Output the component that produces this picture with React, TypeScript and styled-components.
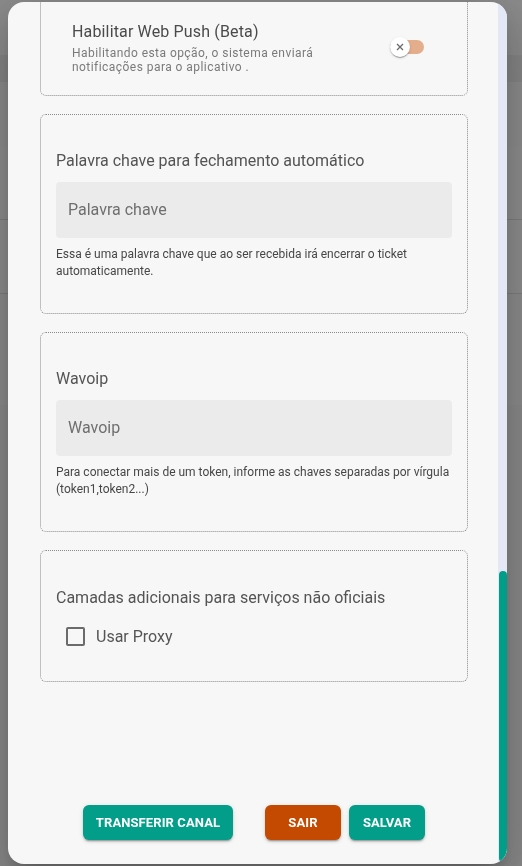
import React, { useLayoutEffect, useRef, useState } from "react";
import styled, { createGlobalStyle } from "styled-components";

const GlobalStyle = createGlobalStyle`
  html, body {
    margin: 0;
    padding: 0;
    height: 100%;
  }
  body {
    font-family: Roboto, "Noto Sans", Arial, sans-serif;
    background: #ffffff;
    overflow: hidden;
  }
  * {
    box-sizing: border-box;
  }
`;

// page behind the modal
const Page = styled.div`
  height: 866px;
  display: flex;
  flex-direction: column;
  background: #ffffff;
`;

const Band = styled.div<{ $h: number; $bg: string; $line?: boolean }>`
  height: ${(p) => p.$h}px;
  flex-shrink: 0;
  background: ${(p) => p.$bg};
  border-bottom: ${(p) => (p.$line ? "1px solid #e2e2e2" : "none")};
`;

const Backdrop = styled.div`
  position: fixed;
  inset: 0;
  background: rgba(0, 0, 0, 0.45);
  display: flex;
  padding: 2px 15px 2px 8px;
`;

const Dialog = styled.div`
  flex: 1;
  display: flex;
  background: #f7f7f7;
  border-radius: 16px;
  overflow: hidden;
  box-shadow: 0 11px 15px -7px rgba(0, 0, 0, 0.2),
    0 24px 38px 3px rgba(0, 0, 0, 0.14), 0 9px 46px 8px rgba(0, 0, 0, 0.12);
`;

const ScrollArea = styled.div`
  flex: 1;
  overflow-y: auto;
  scrollbar-width: none;

  &::-webkit-scrollbar {
    display: none;
  }
`;

const ScrollTrack = styled.div`
  width: 9px;
  flex-shrink: 0;
  background: #e4e7f6;
  padding-bottom: 2px;
`;

const ScrollThumb = styled.div`
  width: 8px;
  margin-left: 1px;
  border-radius: 4px;
  background: #009e88;
`;

const Content = styled.div`
  display: flex;
  flex-direction: column;
  gap: 18px;
  padding: 0 30px 24px 32px;
`;

const DialogTitle = styled.h2`
  margin: 0;
  padding: 20px 0 0 0;
  height: 64px;
  font-size: 20px;
  font-weight: 500;
  color: #333;
`;

const Card = styled.div<{ $pad: string }>`
  border: 1px dotted #8a8a8a;
  border-radius: 6px;
  padding: ${(p) => p.$pad};
`;

const Title = styled.div`
  font-size: 16px;
  line-height: 24px;
  color: #545454;
`;

const InputBox = styled.input`
  display: block;
  width: 100%;
  height: 56px;
  margin-top: 9px;
  border: none;
  border-radius: 4px;
  background: #ebebeb;
  padding: 0 12px;
  font-family: inherit;
  font-size: 16px;
  color: #333;
  outline: none;

  &::placeholder {
    color: #6f6f6f;
  }
`;

const TextArea = styled.textarea`
  display: block;
  width: 100%;
  height: 246px;
  margin-top: 9px;
  border: none;
  border-radius: 4px;
  background: #ebebeb;
  padding: 18px 12px;
  font-family: inherit;
  font-size: 16px;
  resize: none;
  outline: none;

  &::placeholder {
    color: #6f6f6f;
  }
`;

const Helper = styled.p`
  margin: 8px 0 0 0;
  font-size: 12px;
  line-height: 17.5px;
  color: #474747;
`;

const PushRow = styled.div`
  display: flex;
  align-items: center;
  justify-content: space-between;
`;

const PushText = styled.div`
  max-width: 270px;
`;

const PushTitle = styled.div`
  font-size: 16px;
  line-height: 24px;
  color: #4a4a4a;
  letter-spacing: 0.15px;
`;

const PushSub = styled.div`
  margin-top: 2px;
  font-size: 12px;
  line-height: 14px;
  color: #7a7a7a;
  letter-spacing: 0.45px;
`;

const Switch = styled.span`
  position: relative;
  width: 34px;
  height: 20px;
  flex-shrink: 0;
`;

const Track = styled.span`
  position: absolute;
  left: 0;
  top: 3px;
  width: 34px;
  height: 14px;
  border-radius: 7px;
  background: #e4ad8c;
`;

const Thumb = styled.span`
  position: absolute;
  left: 0;
  top: 0;
  width: 20px;
  height: 20px;
  border-radius: 50%;
  background: #ffffff;
  display: flex;
  align-items: center;
  justify-content: center;
  box-shadow: 0 2px 1px -1px rgba(0, 0, 0, 0.2), 0 1px 1px 0 rgba(0, 0, 0, 0.14),
    0 1px 3px 0 rgba(0, 0, 0, 0.12);
`;

const CheckRow = styled.label`
  display: flex;
  align-items: center;
  gap: 11px;
  height: 42px;
  margin-top: 6px;
  padding-left: 10px;
  cursor: pointer;
`;

const CheckBox = styled.span`
  width: 19px;
  height: 19px;
  border: 2px solid #6b6b6b;
  border-radius: 2px;
`;

const CheckLabel = styled.span`
  font-size: 16px;
  color: #555;
`;

const Actions = styled.div`
  display: flex;
  justify-content: center;
  gap: 8px;
  margin-top: 105px;
`;

const Button = styled.button<{ $color: string; $w: number; $spaced?: boolean }>`
  width: ${(p) => p.$w}px;
  height: 35px;
  margin-right: ${(p) => (p.$spaced ? 24 : 0)}px;
  border: none;
  border-radius: 6px;
  background: ${(p) => p.$color};
  color: #ffffff;
  font-family: inherit;
  font-size: 13px;
  font-weight: 700;
  letter-spacing: 0.1px;
  text-transform: uppercase;
  cursor: pointer;
  box-shadow: 0 3px 1px -2px rgba(0, 0, 0, 0.2), 0 2px 2px 0 rgba(0, 0, 0, 0.14),
    0 1px 5px 0 rgba(0, 0, 0, 0.12);
`;

type Field = { title: string; placeholder: string; helper: string; multiline?: boolean };

const earlierFields: Field[] = [
  { title: "Nome da conexão", placeholder: "Nome", helper: "Nome exibido para identificar este canal nas filas e nos relatórios." },
  { title: "Mensagem de saudação", placeholder: "Saudação", helper: "Mensagem enviada automaticamente quando um novo ticket é aberto.", multiline: true },
  { title: "Mensagem de despedida", placeholder: "Despedida", helper: "Mensagem enviada automaticamente quando o ticket é encerrado." },
  { title: "Mensagem fora de expediente", placeholder: "Fora de expediente", helper: "Enviada quando o contato escreve fora do horário de atendimento." },
  { title: "Tempo de inatividade (minutos)", placeholder: "Minutos", helper: "Após este tempo sem resposta o ticket será encerrado." },
  { title: "Token da API", placeholder: "Token", helper: "Token utilizado para integrações externas com este canal." },
  { title: "Filas", placeholder: "Selecione as filas", helper: "Filas que receberão os tickets deste canal." },
];

function FieldCard({ title, placeholder, helper, multiline }: Field) {
  return (
    <Card $pad="34px 15px 32px 15px">
      <Title>{title}</Title>
      {multiline ? <TextArea placeholder={placeholder} /> : <InputBox placeholder={placeholder} />}
      <Helper>{helper}</Helper>
    </Card>
  );
}

export default function App() {
  const scrollRef = useRef<HTMLDivElement>(null);
  const trackRef = useRef<HTMLDivElement>(null);
  const [bar, setBar] = useState({ top: 0, height: 0 });

  const updateBar = () => {
    const el = scrollRef.current;
    const track = trackRef.current;
    if (!el || !track) return;
    const trackLen = track.clientHeight - 2;
    const ratio = trackLen / el.scrollHeight;
    setBar({ top: el.scrollTop * ratio, height: el.clientHeight * ratio });
  };

  useLayoutEffect(() => {
    const el = scrollRef.current;
    if (el) el.scrollTop = el.scrollHeight;
    updateBar();
  }, []);

  return (
    <>
      <GlobalStyle />
      <Page>
        <Band $h={55} $bg="#fcfcfc" />
        <Band $h={27} $bg="#f1f1f1" />
        <Band $h={65} $bg="#fdfdfd" />
        <Band $h={73} $bg="#ffffff" $line />
        <Band $h={74} $bg="#ffffff" $line />
        <Band $h={111} $bg="#fcfcfc" />
        <Band $h={461} $bg="#f8f8f8" />
      </Page>
      <Backdrop>
        <Dialog>
          <ScrollArea ref={scrollRef} onScroll={updateBar}>
            <Content>
              <DialogTitle>Editar conexão</DialogTitle>
              {earlierFields.map((f) => (
                <FieldCard key={f.title} {...f} />
              ))}

              <Card $pad="24px 43px 21px 31px">
                <PushRow>
                  <PushText>
                    <PushTitle>Habilitar Web Push (Beta)</PushTitle>
                    <PushSub>
                      Habilitando esta opção, o sistema enviará notificações para o aplicativo .
                    </PushSub>
                  </PushText>
                  <Switch>
                    <Track />
                    <Thumb>
                      <svg width="8" height="8" viewBox="0 0 8 8">
                        <path d="M1 1 L7 7 M7 1 L1 7" stroke="#6a6a6a" strokeWidth="1.3" />
                      </svg>
                    </Thumb>
                  </Switch>
                </PushRow>
              </Card>

              <FieldCard
                title="Palavra chave para fechamento automático"
                placeholder="Palavra chave"
                helper="Essa é uma palavra chave que ao ser recebida irá encerrar o ticket automaticamente."
              />

              <FieldCard
                title="Wavoip"
                placeholder="Wavoip"
                helper="Para conectar mais de um token, informe as chaves separadas por vírgula (token1,token2...)"
              />

              <Card $pad="35px 15px 23px 15px">
                <Title>Camadas adicionais para serviços não oficiais</Title>
                <CheckRow>
                  <CheckBox />
                  <CheckLabel>Usar Proxy</CheckLabel>
                </CheckRow>
              </Card>

              <Actions>
                <Button $color="#029e89" $w={150} $spaced>
                  Transferir canal
                </Button>
                <Button $color="#c34a00" $w={76}>
                  Sair
                </Button>
                <Button $color="#029e89" $w={76}>
                  Salvar
                </Button>
              </Actions>
            </Content>
          </ScrollArea>
          <ScrollTrack ref={trackRef}>
            <ScrollThumb style={{ marginTop: bar.top, height: bar.height }} />
          </ScrollTrack>
        </Dialog>
      </Backdrop>
    </>
  );
}
